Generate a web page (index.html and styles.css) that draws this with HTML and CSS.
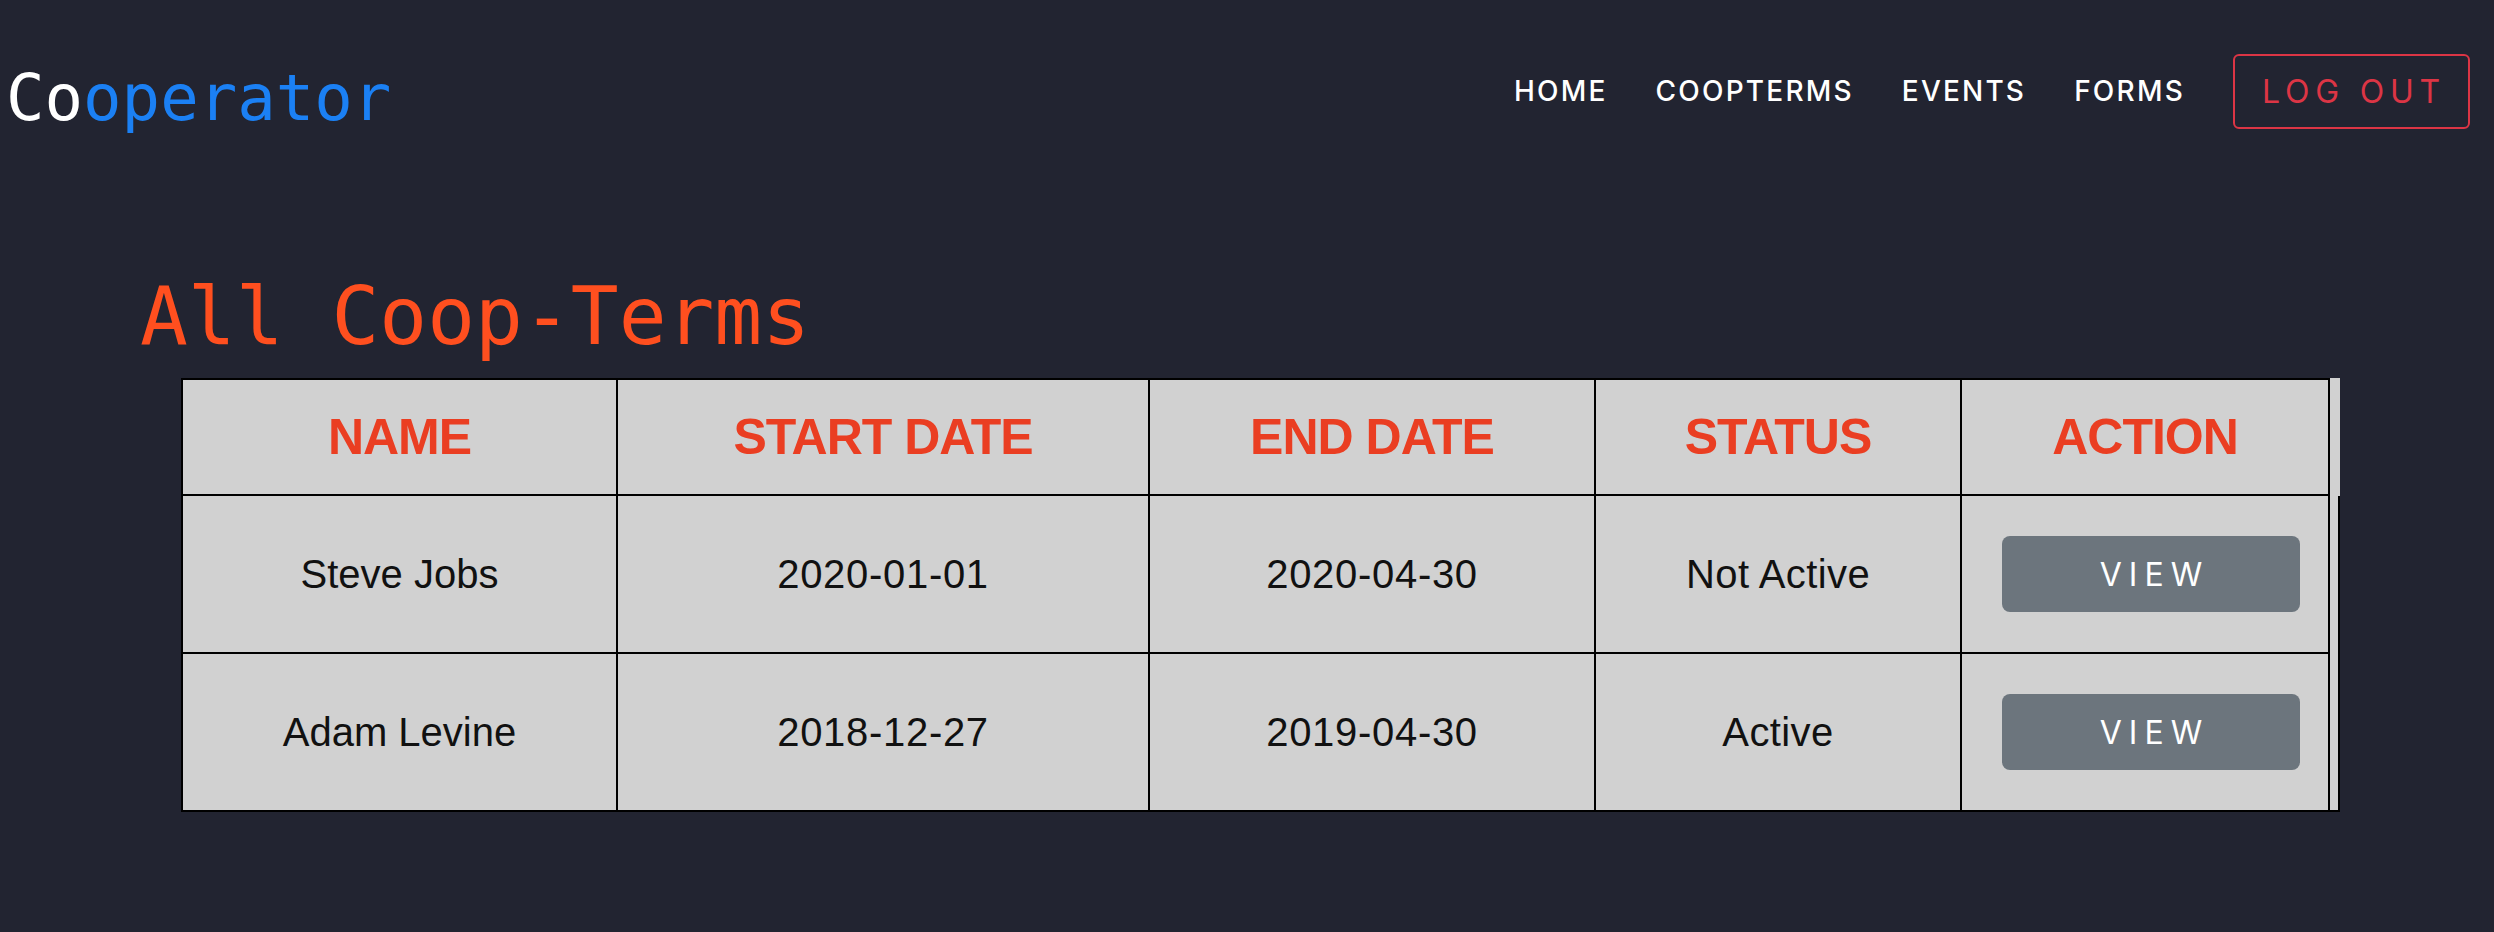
FILE: index.html
```html
<!DOCTYPE html>
<html lang="en">
<head>
<meta charset="utf-8">
<title>Cooperator - All Coop-Terms</title>
<link rel="stylesheet" href="styles.css">
</head>
<body>
<header class="navbar">
  <a class="brand" href="#"><span class="brand-co">Co</span><span class="brand-rest">operator</span></a>
  <nav class="nav">
    <a class="nav-link" href="#">HOME</a>
    <a class="nav-link" href="#">COOPTERMS</a>
    <a class="nav-link" href="#">EVENTS</a>
    <a class="nav-link" href="#">FORMS</a>
    <button class="btn-logout" type="button">LOG OUT</button>
  </nav>
</header>
<main class="content">
  <h1 class="page-title">All Coop-Terms</h1>
  <table class="terms">
    <thead>
      <tr>
        <th class="col-name">NAME</th>
        <th class="col-start">START DATE</th>
        <th class="col-end">END DATE</th>
        <th class="col-status">STATUS</th>
        <th class="col-action">ACTION</th>
        <th class="gutter"></th>
      </tr>
    </thead>
    <tbody>
      <tr>
        <td>Steve Jobs</td>
        <td class="date">2020-01-01</td>
        <td class="date">2020-04-30</td>
        <td class="status">Not Active</td>
        <td class="action"><button class="btn-view" type="button">VIEW</button></td>
        <td class="gutter"></td>
      </tr>
      <tr>
        <td>Adam Levine</td>
        <td class="date">2018-12-27</td>
        <td class="date">2019-04-30</td>
        <td class="status">Active</td>
        <td class="action"><button class="btn-view" type="button">VIEW</button></td>
        <td class="gutter"></td>
      </tr>
    </tbody>
  </table>
</main>
</body>
</html>
```

FILE: styles.css
```css
html, body {
  margin: 0;
  padding: 0;
}

body {
  background: #222431;
  min-height: 932px;
  font-family: Inter, "Liberation Sans", sans-serif;
}

.navbar {
  display: flex;
  justify-content: space-between;
  align-items: center;
  padding: 54px 24px 0 6px;
}

.brand {
  font-family: "DejaVu Sans Mono", "Liberation Mono", monospace;
  font-size: 64px;
  line-height: 62px;
  padding-top: 13px;
  text-decoration: none;
}

.brand-co {
  color: #ffffff;
}

.brand-rest {
  color: #1b80f4;
}

.nav {
  display: flex;
  align-items: center;
  gap: 48px;
}

.nav-link {
  color: #ffffff;
  text-decoration: none;
  font-size: 28px;
  font-weight: 500;
  letter-spacing: 2.2px;
  line-height: 28px;
  padding-bottom: 2px;
}

.btn-logout {
  height: 75px;
  padding: 0 22px 0 27px;
  background: transparent;
  border: 2px solid #dc3545;
  border-radius: 6px;
  color: #dc3545;
  font-family: Inter, "Liberation Sans", sans-serif;
  font-size: 32px;
  font-weight: 400;
  letter-spacing: 5.8px;
}

.content {
  padding-left: 140px;
}

.page-title {
  margin: 140px 0 14px 0;
  font-family: "DejaVu Sans Mono", "Liberation Mono", monospace;
  font-size: 79.5px;
  font-weight: normal;
  line-height: 1.2;
  color: #ff4f1f;
}

.terms {
  margin-left: 41px;
  width: 2159px;
  table-layout: fixed;
  border-collapse: separate;
  border-spacing: 0;
  background: #d1d1d1;
}

.terms th,
.terms td {
  box-sizing: border-box;
  padding: 0;
  text-align: center;
  vertical-align: middle;
  border-right: 2px solid #000;
  border-bottom: 2px solid #000;
}

.terms th:first-child,
.terms td:first-child {
  border-left: 2px solid #000;
}

.terms thead tr {
  height: 118px;
}

.terms tbody tr {
  height: 158px;
}

.terms th {
  border-top: 2px solid #000;
  font-family: "Liberation Sans", Arial, sans-serif;
  font-weight: bold;
  font-size: 50px;
  letter-spacing: -1px;
  color: #ea3e22;
}

.terms td {
  font-family: "Liberation Sans", Arial, sans-serif;
  font-size: 40px;
  color: #111111;
}

.terms td.date {
  letter-spacing: 0.7px;
}

.terms td.status {
  letter-spacing: 0.4px;
}

.col-name { width: 437px; }
.col-start { width: 532px; }
.col-end { width: 446px; }
.col-status { width: 366px; }
.col-action { width: 368px; }

.terms th.gutter {
  width: 10px;
  border: 0;
}

.terms td.gutter {
  border-bottom: 0;
}

.terms tbody tr:last-child td.gutter {
  border-bottom: 2px solid #000;
}

.terms td.action {
  padding: 0 28px 0 40px;
}

.btn-view {
  display: block;
  width: 100%;
  height: 76px;
  border: 0;
  border-radius: 8px;
  background: #6c757d;
  color: #ffffff;
  font-family: Inter, "Liberation Sans", sans-serif;
  font-size: 32px;
  font-weight: 400;
  letter-spacing: 7px;
  padding: 0 0 0 7px;
}
```
